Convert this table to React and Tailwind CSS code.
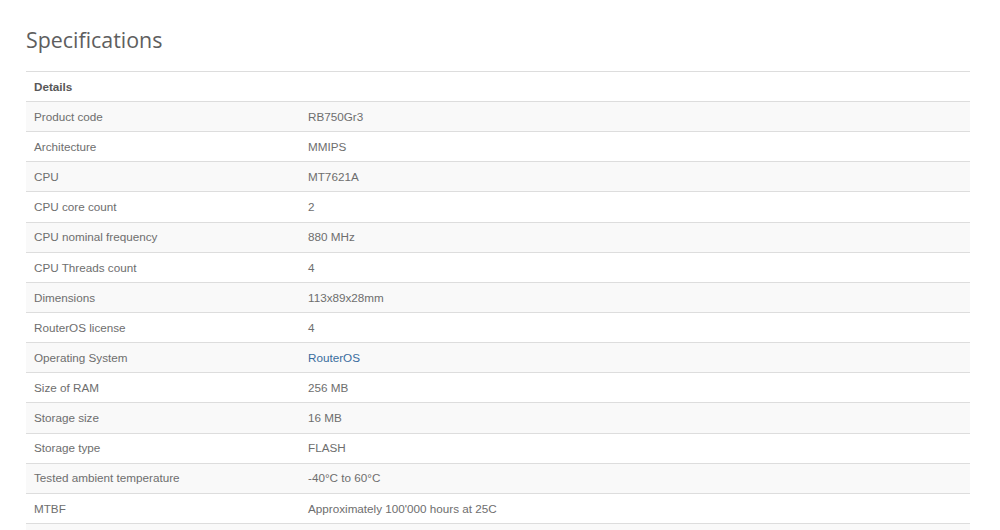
import React from "react";

const rows = [
  ["Product code", "RB750Gr3"],
  ["Architecture", "MMIPS"],
  ["CPU", "MT7621A"],
  ["CPU core count", "2"],
  ["CPU nominal frequency", "880 MHz"],
  ["CPU Threads count", "4"],
  ["Dimensions", "113x89x28mm"],
  ["RouterOS license", "4"],
  ["Operating System", "RouterOS", true],
  ["Size of RAM", "256 MB"],
  ["Storage size", "16 MB"],
  ["Storage type", "FLASH"],
  ["Tested ambient temperature", "-40°C to 60°C"],
  ["MTBF", "Approximately 100'000 hours at 25C"],
  ["", ""],
];

export default function App() {
  return (
    <div className="w-[1000px] h-[530px] overflow-hidden bg-white pl-[26px] pr-[30px]">
      <h2 className="pt-[25px] h-[71px] text-[21.4px] leading-[30px] text-[#5e5e5e] font-['Open_Sans',sans-serif]">
        Specifications
      </h2>
      <table className="w-full border-collapse font-['Liberation_Sans',Arial,sans-serif] text-[11.7px] text-[#6e6e6e]">
        <tbody>
          <tr className="h-[30px] border-t border-[#ddd]">
            <td className="px-2 font-bold text-[#585858]" colSpan={2}>Details</td>
          </tr>
          {rows.map(([label, value, link], i) => (
            <tr
              key={i}
              className={`h-[30.15px] border-t border-[#ddd] ${i % 2 === 0 ? "bg-[#f9f9f9]" : "bg-white"}`}
            >
              <td className="w-[274px] px-2">{label}</td>
              <td className="px-2">
                {link ? <a className="text-[#3a6d9e]">{value}</a> : value}
              </td>
            </tr>
          ))}
        </tbody>
      </table>
    </div>
  );
}
